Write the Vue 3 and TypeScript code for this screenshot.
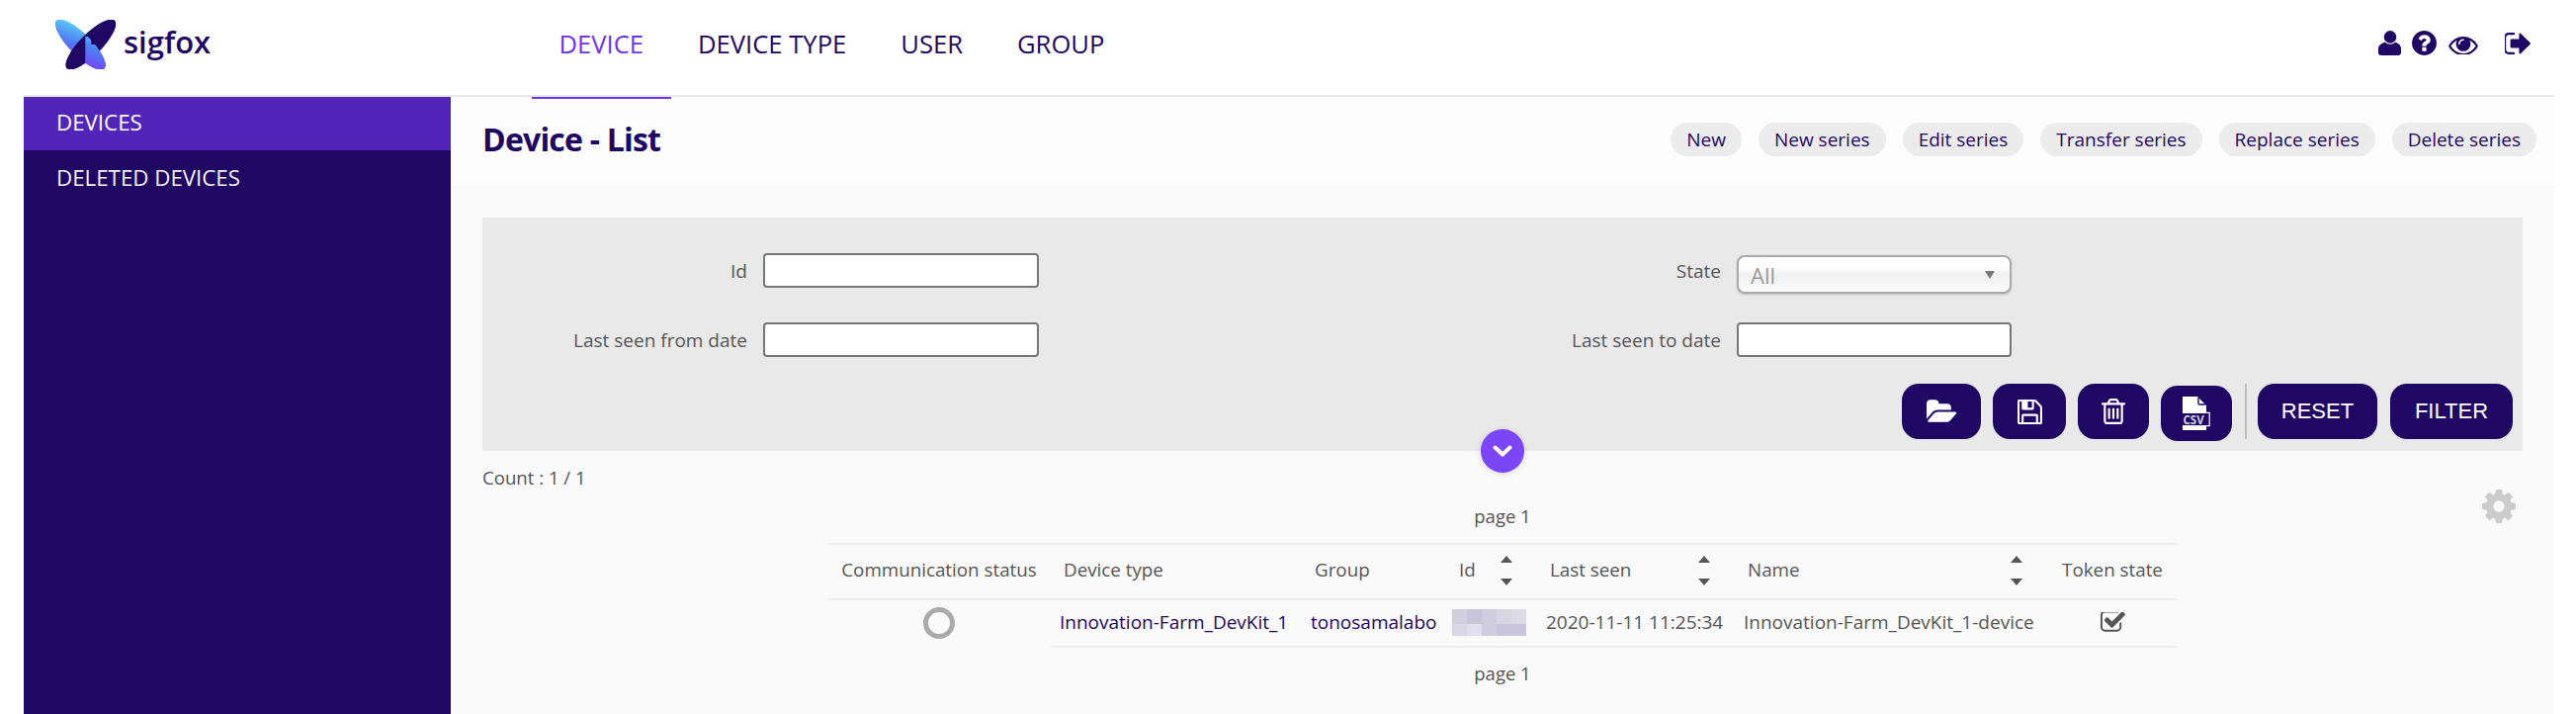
<script setup lang="ts">
const navItems = ['DEVICE', 'DEVICE TYPE', 'USER', 'GROUP']
const seriesActions = ['New', 'New series', 'Edit series', 'Transfer series', 'Replace series', 'Delete series']
const mosaic = ['#d2cfe0', '#c9c6dc', '#d0cde1', '#d9d6e4', '#dcdae6', '#d9d6e6', '#e1dfec', '#d0cde1', '#cac5dd', '#cac5dd']
</script>

<template>
  <div class="app">
    <header class="top">
      <div class="logo">
        <svg class="logo-mark" viewBox="0 0 61 50" width="61" height="50" aria-hidden="true">
          <defs>
            <linearGradient id="wing" x1="0" y1="0.15" x2="1" y2="0.85">
              <stop offset="0" stop-color="#5ed6fb" />
              <stop offset="0.5" stop-color="#4f7ff0" />
              <stop offset="1" stop-color="#7a3df5" />
            </linearGradient>
            <clipPath id="lower"><rect x="30.3" y="25" width="31" height="25" /><rect x="30.3" y="17" width="6" height="9" /></clipPath>
          </defs>
          <ellipse cx="25.3" cy="25" rx="34.3" ry="11" transform="rotate(45 25.3 25)" fill="url(#wing)" />
          <ellipse cx="35.8" cy="25" rx="34.3" ry="11" transform="rotate(-45 35.8 25)" fill="#1f0763" />
          <g clip-path="url(#lower)">
            <ellipse cx="25.3" cy="25" rx="34.3" ry="11" transform="rotate(45 25.3 25)" fill="url(#wing)" />
          </g>
        </svg>
        <span class="logo-text">sigfox</span>
      </div>
      <nav class="nav">
        <a v-for="(item, i) in navItems" :key="item" class="nav-link" :class="{ active: i === 0 }">{{ item }}</a>
      </nav>
      <div class="top-icons">
        <svg class="ic-user" viewBox="0 0 23 25" width="23" height="25">
          <circle cx="12" cy="6.4" r="6.3" />
          <path d="M7 11.5C9 14.5 15 14.5 17 11.5C21 13 23 15 23 18V22Q23 25 20 25H3Q0 25 0 22V18C0 15 3 13 7 11.5Z" />
        </svg>
        <svg class="ic-help" viewBox="128 128 1536 1536" width="25" height="25">
          <path d="M1024 1376v-192q0-14-9-23t-23-9h-192q-14 0-23 9t-9 23v192q0 14 9 23t23 9h192q14 0 23-9t9-23zm256-672q0-88-55.5-163t-138.5-116-170-41q-243 0-371 213-15 24 8 42l132 100q7 6 19 6 16 0 25-12 53-68 86-92 34-24 86-24 48 0 85.5 26t37.5 59q0 38-20 61t-68 45q-63 28-115.5 86.5t-52.5 125.5v36q0 14 9 23t23 9h192q14 0 23-9t9-23q0-19 21.5-49.5t54.5-49.5q32-18 49-28.5t46-35 44.5-48 28-60.5 12.5-81zm384 192q0 209-103 385.5t-279.5 279.5-385.5 103-385.5-103-279.5-279.5-103-385.5 103-385.5 279.5-279.5 385.5-103 385.5 103 279.5 279.5 103 385.5z" />
        </svg>
        <svg class="ic-eye" viewBox="0 320 1792 1152" width="30" height="19">
          <path d="M1664 960q-152-236-381-353 61 104 61 225 0 185-131.5 316.5t-316.5 131.5-316.5-131.5-131.5-316.5q0-121 61-225-229 117-381 353 133 205 333.5 326.5t434.5 121.5 434.5-121.5 333.5-326.5zm-720-384q0-20-14-34t-34-14q-125 0-214.5 89.5t-89.5 214.5q0 20 14 34t34 14 34-14 14-34q0-86 61-147t147-61q20 0 34-14t14-34zm848 384q0 34-20 69-140 230-376.5 368.5t-499.5 138.5-499.5-139-376.5-368q-20-35-20-69t20-69q140-229 376.5-368t499.5-139 499.5 139 376.5 368q20 35 20 69z" />
        </svg>
        <svg class="ic-out" viewBox="128 256 1504 1280" width="26" height="22">
          <path d="M704 1440q0 4 1 20t.5 26.5-3 23.5-10 19.5-20.5 6.5h-320q-119 0-203.5-84.5t-84.5-203.5v-704q0-119 84.5-203.5t203.5-84.5h320q13 0 22.5 9.5t9.5 22.5q0 4 1 20t.5 26.5-3 23.5-10 19.5-20.5 6.5h-320q-66 0-113 47t-47 113v704q0 66 47 113t113 47h288l11.5 1 11.5 3 8 5.5 7 9 2 13.5zm928-544q0 26-19 45l-544 544q-19 19-45 19t-45-19-19-45v-288h-448q-26 0-45-19t-19-45v-384q0-26 19-45t45-19h448v-288q0-26 19-45t45-19 45 19l544 544q19 19 19 45z" />
        </svg>
      </div>
    </header>

    <div class="body">
      <aside class="side">
        <a class="side-item current">DEVICES</a>
        <a class="side-item">DELETED DEVICES</a>
      </aside>

      <main class="main">
        <div class="title-bar">
          <h1 class="title">Device - List</h1>
          <div class="series">
            <button v-for="a in seriesActions" :key="a" class="pill">{{ a }}</button>
          </div>
        </div>

        <div class="content">
          <section class="panel">
            <div class="filters">
              <label class="f-label">Id</label>
              <input class="f-input" type="text" />
              <label class="f-label">State</label>
              <div class="f-select">
                <select><option>All</option></select>
              </div>
              <label class="f-label">Last seen from date</label>
              <input class="f-input" type="text" />
              <label class="f-label">Last seen to date</label>
              <input class="f-input" type="text" />
            </div>
            <div class="actions">
              <button class="act w-folder">
                <svg viewBox="0 0 2048 1792" width="33" height="29">
                  <path d="M1943 952q0 31-31 66l-336 396q-43 51-120.5 86.5t-143.5 35.5h-1088q-34 0-60.5-13t-26.5-43q0-31 31-66l336-396q43-51 120.5-86.5t143.5-35.5h1088q34 0 60.5 13t26.5 43zm-343-344v160h-832q-94 0-197 47.5t-164 119.5l-337 396-5 6q0-4-.5-12.5t-.5-12.5v-960q0-92 66-158t158-66h320q92 0 158 66t66 158v32h544q92 0 158 66t66 158z" />
                </svg>
              </button>
              <button class="act w-save">
                <svg viewBox="128 128 1536 1536" width="25" height="25">
                  <path d="M512 1536h768v-384h-768v384zm896 0h128v-896q0-14-10-38.5t-20-34.5l-281-281q-10-10-34-20t-39-10v416q0 40-28 68t-68 28h-576q-40 0-68-28t-28-68v-416h-128v1280h128v-416q0-40 28-68t68-28h832q40 0 68 28t28 68v416zm-384-928v-320q0-13-9.5-22.5t-22.5-9.5h-192q-13 0-22.5 9.5t-9.5 22.5v320q0 13 9.5 22.5t22.5 9.5h192q13 0 22.5-9.5t9.5-22.5zm640 32v928q0 40-28 68t-68 28h-1344q-40 0-68-28t-28-68v-1344q0-40 28-68t68-28h928q40 0 88 20t76 48l280 280q28 28 48 76t20 88z" />
                </svg>
              </button>
              <button class="act w-trash">
                <svg viewBox="128 128 1536 1536" width="26" height="26">
                  <path d="M704 736v576q0 14-9 23t-23 9h-64q-14 0-23-9t-9-23v-576q0-14 9-23t23-9h64q14 0 23 9t9 23zm256 0v576q0 14-9 23t-23 9h-64q-14 0-23-9t-9-23v-576q0-14 9-23t23-9h64q14 0 23 9t9 23zm256 0v576q0 14-9 23t-23 9h-64q-14 0-23-9t-9-23v-576q0-14 9-23t23-9h64q14 0 23 9t9 23zm128 724v-948h-896v948q0 22 7 40.5t14.5 27 10.5 8.5h832q3 0 10.5-8.5t14.5-27 7-40.5zm-672-1076h448l-48-117q-7-9-17-11h-317q-10 2-17 11zm928 32v64q0 14-9 23t-23 9h-96v948q0 83-47 143.5t-113 60.5h-832q-66 0-113-58.5t-47-141.5v-952h-96q-14 0-23-9t-9-23v-64q0-14 9-23t23-9h309l70-167q15-37 54-63t79-26h320q40 0 79 26t54 63l70 167h309q14 0 23 9t9 23z" />
                </svg>
              </button>
              <button class="act w-csv">
                <svg viewBox="0 0 28 34" width="28" height="34">
                  <path d="M0 0H15L24 9V17H0Z" />
                  <path d="M16 1V7Q16 8 17 8H23" fill="none" stroke="#1f0763" stroke-width="1.4" />
                  <path d="M0 29H24V34H0Z" />
                  <rect x="0" y="17" width="27" height="12" fill="#1f0763" />
                  <path d="M24 16.4H27.2V29.6H24" fill="none" stroke="#fff" stroke-width="1.2" />
                  <text x="0.5" y="27.5" class="csv-text">CSV</text>
                </svg>
              </button>
              <span class="divider"></span>
              <button class="act text w-reset">RESET</button>
              <button class="act text w-filter">FILTER</button>
            </div>
            <button class="toggle" aria-label="Toggle filters">
              <svg viewBox="0 0 20 12" width="20" height="12">
                <path d="M2.5 2.5L10 9.5L17.5 2.5" fill="none" stroke="#fff" stroke-width="4" stroke-linecap="round" stroke-linejoin="round" />
              </svg>
            </button>
          </section>

          <section class="results">
            <div class="count">Count : 1 / 1</div>
            <svg class="gear" viewBox="128 128 1536 1536" width="34" height="34">
              <path d="M1152 896q0-106-75-181t-181-75-181 75-75 181 75 181 181 75 181-75 75-181zm512-109v222q0 12-8 23t-20 13l-185 28q-19 54-39 91 35 50 107 138 10 12 10 25t-9 23q-27 37-99 108t-94 71q-12 0-26-9l-138-108q-44 23-91 38-16 136-29 186-7 28-36 28h-222q-14 0-24.5-8.5t-11.5-21.5l-28-184q-49-16-90-37l-141 107q-10 9-25 9-14 0-25-11-126-114-165-168-7-10-7-23 0-12 8-23 15-21 51-66.5t54-70.5q-27-50-41-99l-183-27q-13-2-21-12.5t-8-23.5v-222q0-12 8-23t19-13l186-28q14-46 39-92-40-57-107-138-10-12-10-24 0-10 9-23 26-36 98.5-107.5t94.5-71.5q13 0 26 10l138 107q44-23 91-38 16-136 29-186 7-28 36-28h222q14 0 24.5 8.5t11.5 21.5l28 184q49 16 90 37l142-107q9-9 24-9 13 0 25 10 129 119 165 170 7 8 7 22 0 12-8 23-15 21-51 66.5t-54 70.5q26 50 41 98l183 28q13 2 21 12.5t8 23.5z" />
            </svg>
            <div class="page top-page">page 1</div>
            <table class="grid">
              <colgroup>
                <col class="c1" /><col class="c2" /><col class="c3" /><col class="c4" /><col class="c5" /><col class="c6" /><col class="c7" />
              </colgroup>
              <thead>
                <tr>
                  <th class="center">Communication status</th>
                  <th>Device type</th>
                  <th>Group</th>
                  <th><div class="sortable">Id<span class="sort"><i class="up"></i><i class="down"></i></span></div></th>
                  <th><div class="sortable">Last seen<span class="sort"><i class="up"></i><i class="down"></i></span></div></th>
                  <th><div class="sortable">Name<span class="sort"><i class="up"></i><i class="down"></i></span></div></th>
                  <th class="center">Token state</th>
                </tr>
              </thead>
              <tbody>
                <tr>
                  <td class="center no-line"><span class="ring"></span></td>
                  <td class="link">Innovation-Farm_DevKit_1</td>
                  <td class="link">tonosamalabo</td>
                  <td class="id-cell">
                    <div class="mosaic">
                      <span v-for="(c, i) in mosaic" :key="i" :style="{ background: c }"></span>
                    </div>
                  </td>
                  <td>2020-11-11 11:25:34</td>
                  <td>Innovation-Farm_DevKit_1-device</td>
                  <td class="center">
                    <svg class="check" viewBox="64 256 1664 1344" width="25" height="21">
                      <path d="M1472 930v318q0 119-84.5 203.5t-203.5 84.5h-832q-119 0-203.5-84.5t-84.5-203.5v-832q0-119 84.5-203.5t203.5-84.5h832q63 0 117 25 15 7 18 23 3 17-9 29l-49 49q-10 10-23 10-3 0-9-2-23-6-45-6h-832q-66 0-113 47t-47 113v832q0 66 47 113t113 47h832q66 0 113-47t47-113v-254q0-13 9-22l64-64q10-10 23-10 6 0 12 3 20 8 20 29zm231-489l-814 814q-24 24-57 24t-57-24l-430-430q-24-24-24-57t24-57l110-110q24-24 57-24t57 24l263 263 647-647q24-24 57-24t57 24l110 110q24 24 24 57t-24 57z" />
                    </svg>
                  </td>
                </tr>
              </tbody>
            </table>
            <div class="page bottom-page">page 1</div>
          </section>
        </div>
      </main>
    </div>
  </div>
</template>

<style scoped>
.app {
  height: 722px;
  padding: 0 22px 0 24px;
  display: flex;
  flex-direction: column;
  font-family: "Open Sans", "Noto Sans", sans-serif;
  color: #555;
  overflow: hidden;
}

.top {
  height: 96px;
  flex: none;
  display: flex;
  align-items: stretch;
  border-bottom: 2px solid #e8e8e8;
  position: relative;
}
.logo {
  width: 514px;
  padding-left: 32px;
  box-sizing: border-box;
  flex: none;
  display: flex;
  align-items: flex-start;
  padding-top: 20px;
}
.logo-text {
  margin: 0 0 0 8px;
  font-size: 31px;
  font-weight: 600;
  line-height: 40px;
  padding-top: 2px;
  color: #1f0763;
}
.nav {
  display: flex;
}
.nav-link {
  position: relative;
  padding: 0 27.5px;
  line-height: 90px;
  font-size: 25.6px;
  color: #1f0763;
}
.nav-link.active {
  color: #6f35ee;
}
.nav-link.active::after {
  content: "";
  position: absolute;
  left: 0;
  right: 0;
  bottom: -4px;
  height: 2px;
  background: #6f35ee;
  z-index: 2;
}
.top-icons {
  margin-left: auto;
  padding-right: 24px;
  display: flex;
  align-items: flex-start;
  fill: #1f0763;
}
.ic-user { margin-top: 31px; }
.ic-help { margin-top: 31px; margin-left: 11px; }
.ic-eye { margin-top: 36px; margin-left: 12px; }
.ic-out { margin-top: 33px; margin-left: 27px; }

.body {
  flex: 1;
  display: flex;
  min-height: 0;
}
.side {
  width: 432px;
  flex: none;
  background: #1f0763;
}
.side-item {
  display: block;
  height: 54px;
  line-height: 52px;
  padding-left: 33px;
  font-size: 22.3px;
  color: #f2f2f2;
}
.side-item + .side-item {
  line-height: 55px;
}
.side-item.current {
  background: #5225b9;
  color: #fff;
}

.main {
  flex: 1;
  min-width: 0;
  background: #fafafa;
}
.title-bar {
  height: 90px;
  background: #fdfdfd;
  display: flex;
  align-items: center;
  justify-content: space-between;
  padding: 0 18px 0 32px;
}
.title {
  margin: 0 0 6px;
  font-size: 32px;
  letter-spacing: -0.8px;
  font-weight: 700;
  color: #1f0763;
}
.series {
  display: flex;
  gap: 17px;
  margin-bottom: 4px;
}
.pill {
  height: 34px;
  padding: 0 16px;
  border: 0;
  border-radius: 17px;
  background: #ececec;
  color: #1f0763;
  font-family: inherit;
  font-size: 19px;
  line-height: 34px;
}

.content {
  padding: 32px 32px 0;
}
.panel {
  height: 236px;
  box-sizing: border-box;
  padding-top: 36px;
  background: #e9e9e9;
  position: relative;
}
.filters {
  display: grid;
  grid-template-columns: 284px 279px 706px 278px;
  grid-auto-rows: 35px;
  row-gap: 35px;
  align-items: center;
}
.f-label {
  padding-right: 16px;
  text-align: right;
  font-size: 19px;
  color: #555;
}
.f-input {
  box-sizing: border-box;
  width: 100%;
  height: 35px;
  border: 2px solid #777;
  border-radius: 4px;
  background: #fff;
  outline: 0;
}
.f-select {
  position: relative;
  align-self: start;
  height: 39px;
  margin-top: 2px;
}
.f-select select {
  box-sizing: border-box;
  width: 100%;
  height: 39px;
  padding: 0 0 0 12px;
  appearance: none;
  border: 2px solid #aaa;
  border-radius: 8px;
  background: linear-gradient(#fff 0%, #fdfdfd 35%, #f0f0f0 50%, #f7f7f7 80%, #fcfcfc 100%);
  box-shadow: 0 1px 2px rgba(0, 0, 0, 0.2);
  font-family: inherit;
  font-size: 22px;
  color: #999;
}
.f-select::after {
  content: "";
  position: absolute;
  right: 17px;
  top: 16px;
  border-left: 5px solid transparent;
  border-right: 5px solid transparent;
  border-top: 8px solid #777;
}
.actions {
  display: flex;
  align-items: flex-start;
  justify-content: flex-end;
  gap: 12px;
  margin-top: 27px;
  padding-right: 10px;
}
.act {
  height: 56px;
  padding: 0;
  border: 0;
  border-radius: 17px;
  background: #1f0763;
  color: #fff;
  fill: #fff;
  display: flex;
  align-items: center;
  justify-content: center;
}
.act.text {
  font-family: "Liberation Sans", Arial, sans-serif;
  font-size: 22px;
}
.w-folder { width: 80px; }
.w-save { width: 74px; }
.w-trash { width: 72px; }
.w-csv { width: 72px; margin-top: 2px; }
.w-reset { width: 121px; }
.w-filter { width: 124px; margin-left: 1px; }
.csv-text {
  font-family: "Open Sans", sans-serif;
  font-size: 11.5px;
  font-weight: 700;
  fill: #d4d0e4;
}
.divider {
  width: 2px;
  height: 56px;
  margin-left: 1px;
  margin-right: -1px;
  background: #bdbdbd;
}
.toggle {
  position: absolute;
  left: 1010px;
  bottom: -22px;
  width: 44px;
  height: 44px;
  padding: 0;
  border: 0;
  border-radius: 50%;
  background: #7c45f5;
  box-shadow: 0 1px 6px rgba(0, 0, 0, 0.15);
  display: flex;
  align-items: center;
  justify-content: center;
}

.results {
  position: relative;
}
.count {
  height: 54px;
  line-height: 54px;
  font-size: 18.6px;
  color: #555;
}
.gear {
  position: absolute;
  top: 39px;
  right: 7px;
  fill: #ccc;
}
.page {
  text-align: center;
  font-size: 18.5px;
  height: 24px;
  line-height: 24px;
  color: #555;
}
.top-page {
  margin-bottom: 15px;
}
.bottom-page {
  margin-top: 14px;
}
.grid {
  width: 1366px;
  margin: 0 auto;
  border-collapse: collapse;
  table-layout: fixed;
  font-size: 19px;
}
.c1 { width: 226px; }
.c2 { width: 254px; }
.c3 { width: 146px; }
.c4 { width: 92px; }
.c5 { width: 200px; }
.c6 { width: 316px; }
.c7 { width: 132px; }
th {
  height: 50px;
  padding: 0 0 4px 13px;
  border-top: 2px solid #efefef;
  border-bottom: 2px solid #efefef;
  text-align: left;
  font-size: 18.8px;
  font-weight: 400;
  white-space: nowrap;
  color: #555;
}
th.center {
  padding: 0 0 4px;
  text-align: center;
}
td.center {
  padding: 0;
  text-align: center;
}
td {
  height: 48px;
  padding: 0 0 2px 9px;
  box-sizing: border-box;
  border-bottom: 2px solid #efefef;
  white-space: nowrap;
  color: #555;
}
td.no-line {
  border-bottom-color: transparent;
}
td.link {
  color: #1f0763;
}
td.id-cell {
  padding-left: 6px;
}
.sortable {
  display: flex;
  align-items: center;
  justify-content: space-between;
  padding-right: 25px;
}
.sort {
  display: flex;
  flex-direction: column;
  gap: 16px;
  transform: translateY(1px);
}
.sort i {
  display: block;
  width: 0;
  height: 0;
  border-left: 6.5px solid transparent;
  border-right: 6.5px solid transparent;
}
.sort .up {
  border-bottom: 7px solid #555;
}
.sort .down {
  border-top: 7px solid #555;
}
.ring {
  display: block;
  width: 32px;
  height: 32px;
  box-sizing: border-box;
  margin: 0 auto;
  border: 5px solid #aaa;
  border-radius: 50%;
}
.mosaic {
  width: 75px;
  display: grid;
  grid-template-columns: repeat(5, 15px);
  grid-template-rows: 15px 12px;
}
.check {
  fill: #555;
  display: block;
  margin: -2px auto 0;
}
</style>

<style>
html,
body {
  margin: 0;
  background: #fff;
}
</style>
